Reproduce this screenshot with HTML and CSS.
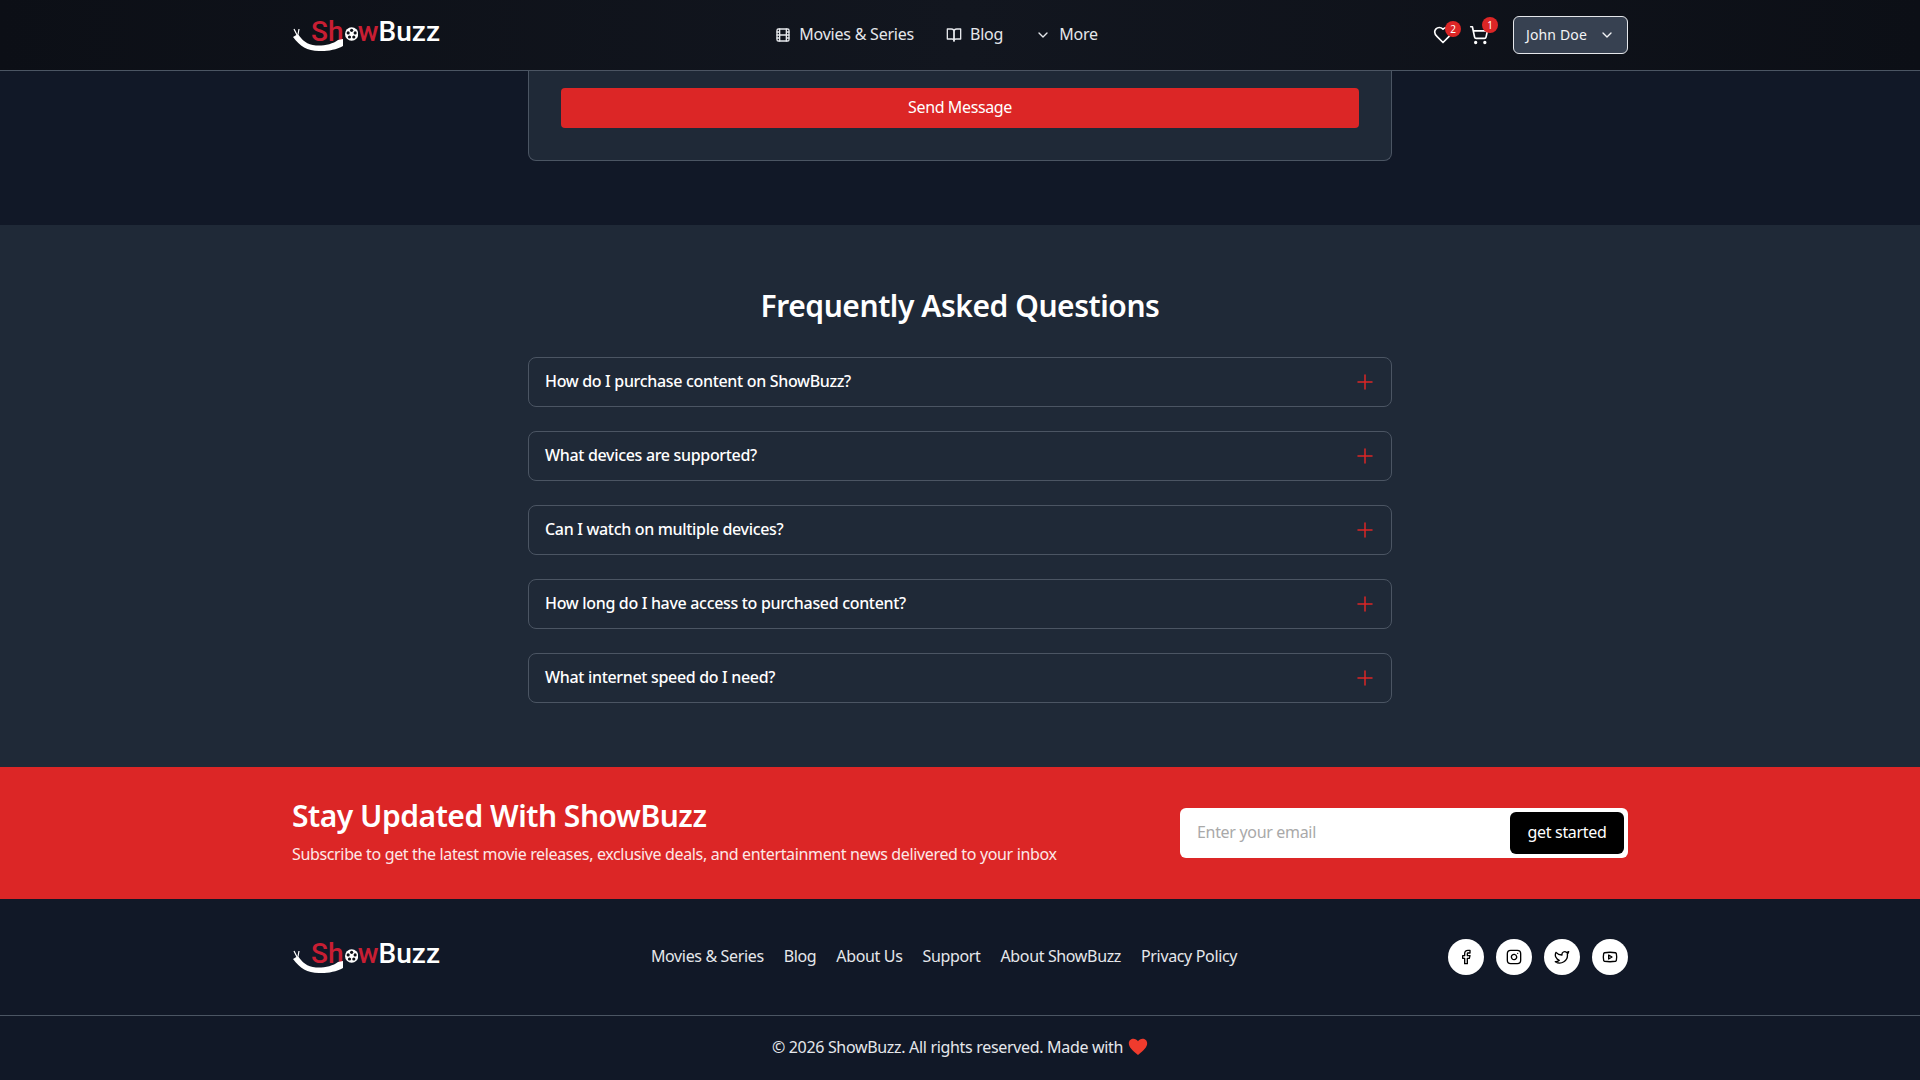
FILE: index.html
```html
<!DOCTYPE html>
<html lang="en">
<head>
<meta charset="UTF-8" />
<title>ShowBuzz - Contact</title>
<link rel="stylesheet" href="styles.css">
</head>
<body>

<svg class="sprite" width="0" height="0" aria-hidden="true">
  <symbol id="swoosh" viewBox="0 0 52 28">
    <path d="M1 11 L6 8 C10 14 15 19 24 19.5 C32 20 41 18 46 14 L51 13 L51 20 C44 24 34 25.500 27 25 C15 25 8 20 1 11 Z" fill="#fff"/>
    <path d="M5 9 L2 3 M6 8.500 L7 3" stroke="#fff" stroke-width="1.200" fill="none"/>
  </symbol>
  <symbol id="reel" viewBox="0 0 16 16">
    <circle cx="8" cy="8" r="8" fill="#fff"/>
    <g fill="#0d1017">
      <circle cx="8" cy="3.600" r="1.900"/>
      <circle cx="3.800" cy="6.700" r="1.900"/>
      <circle cx="12.200" cy="6.700" r="1.900"/>
      <circle cx="5.400" cy="11.600" r="1.900"/>
      <circle cx="10.600" cy="11.600" r="1.900"/>
    </g>
  </symbol>
</svg>

<header class="site-header">
  <div class="wrap header-row">
    <a class="logo" href="#">
      <span class="logo-red">Sh</span><svg class="logo-reel"><use href="#reel"/></svg><span class="logo-red">w</span>Buzz
      <svg class="logo-swoosh"><use href="#swoosh"/></svg>
    </a>
    <nav class="main-nav">
      <a href="#">
        <svg class="icon" viewBox="0 0 24 24"><rect x="3" y="3" width="18" height="18" rx="2"/><path d="M7 3v18M3 7.500h4M3 12h18M3 16.500h4M17 3v18M17 7.500h4M17 16.500h4"/></svg>
        <span class="txt">Movies &amp; Series</span>
      </a>
      <a href="#">
        <svg class="icon" viewBox="0 0 24 24"><path d="M2 3h6a4 4 0 0 1 4 4v14a3 3 0 0 0-3-3H2z"/><path d="M22 3h-6a4 4 0 0 0-4 4v14a3 3 0 0 1 3-3h7z"/></svg>
        <span class="txt">Blog</span>
      </a>
      <a href="#">
        <svg class="icon" viewBox="0 0 24 24"><path d="m6 9 6 6 6-6"/></svg>
        <span class="txt">More</span>
      </a>
    </nav>
    <div class="header-actions">
      <a class="action" href="#">
        <svg class="icon icon-action" viewBox="0 0 24 24"><path d="M19 14c1.490-1.460 3-3.210 3-5.500A5.500 5.500 0 0 0 16.500 3c-1.760 0-3 .5-4.500 2-1.500-1.500-2.740-2-4.500-2A5.500 5.500 0 0 0 2 8.500c0 2.300 1.500 4.050 3 5.500l7 7Z"/></svg>
        <span class="badge">2</span>
      </a>
      <a class="action" href="#">
        <svg class="icon icon-action" viewBox="0 0 24 24"><circle cx="8" cy="21" r="1"/><circle cx="19" cy="21" r="1"/><path d="M2.050 2.050h2l2.660 12.420a2 2 0 0 0 2 1.580h9.780a2 2 0 0 0 1.950-1.570l1.650-7.430H5.120"/></svg>
        <span class="badge badge-cart">1</span>
      </a>
      <button class="user-btn" type="button">
        <span class="txt">John Doe</span>
        <svg class="icon" viewBox="0 0 24 24"><path d="m6 9 6 6 6-6"/></svg>
      </button>
    </div>
  </div>
</header>

<section class="contact">
  <div class="contact-card">
    <button class="send-btn" type="button">Send Message</button>
  </div>
</section>

<section class="faq">
  <h2>Frequently Asked Questions</h2>
  <div class="faq-list">
    <div class="faq-item"><span class="txt">How do I purchase content on ShowBuzz?</span><svg class="plus" viewBox="0 0 24 24"><path d="M5 12h14M12 5v14"/></svg></div>
    <div class="faq-item"><span class="txt">What devices are supported?</span><svg class="plus" viewBox="0 0 24 24"><path d="M5 12h14M12 5v14"/></svg></div>
    <div class="faq-item"><span class="txt">Can I watch on multiple devices?</span><svg class="plus" viewBox="0 0 24 24"><path d="M5 12h14M12 5v14"/></svg></div>
    <div class="faq-item"><span class="txt">How long do I have access to purchased content?</span><svg class="plus" viewBox="0 0 24 24"><path d="M5 12h14M12 5v14"/></svg></div>
    <div class="faq-item"><span class="txt">What internet speed do I need?</span><svg class="plus" viewBox="0 0 24 24"><path d="M5 12h14M12 5v14"/></svg></div>
  </div>
</section>

<section class="newsletter">
  <div class="wrap newsletter-row">
    <div class="news-text">
      <h3>Stay Updated With ShowBuzz</h3>
      <p>Subscribe to get the latest movie releases, exclusive deals, and entertainment news delivered to your inbox</p>
    </div>
    <form class="news-form">
      <input type="email" placeholder="Enter your email" />
      <button type="button">get started</button>
    </form>
  </div>
</section>

<footer class="site-footer">
  <div class="wrap footer-row">
    <a class="logo" href="#">
      <span class="logo-red">Sh</span><svg class="logo-reel"><use href="#reel"/></svg><span class="logo-red">w</span>Buzz
      <svg class="logo-swoosh"><use href="#swoosh"/></svg>
    </a>
    <nav class="footer-nav">
      <a href="#">Movies &amp; Series</a>
      <a href="#">Blog</a>
      <a href="#">About Us</a>
      <a href="#">Support</a>
      <a href="#">About ShowBuzz</a>
      <a href="#">Privacy Policy</a>
    </nav>
    <div class="socials">
      <a href="#"><svg class="icon" viewBox="0 0 24 24"><path d="M18 2h-3a5 5 0 0 0-5 5v3H7v4h3v8h4v-8h3l1-4h-4V7a1 1 0 0 1 1-1h3z"/></svg></a>
      <a href="#"><svg class="icon" viewBox="0 0 24 24"><rect x="2" y="2" width="20" height="20" rx="5"/><path d="M16 11.370A4 4 0 1 1 12.630 8 4 4 0 0 1 16 11.370z"/><path d="M17.500 6.500h.01"/></svg></a>
      <a href="#"><svg class="icon" viewBox="0 0 24 24"><path d="M22 4s-.7 2.100-2 3.400c1.600 10-9.400 17.300-18 11.600 2.200.1 4.400-.6 6-2C3 15.500.5 9.600 3 5c2.200 2.600 5.600 4.100 9 4-.9-4.200 4-6.600 7-3.800 1.100 0 3-1.200 3-1.200z"/></svg></a>
      <a href="#"><svg class="icon" viewBox="0 0 24 24"><path d="M2.500 17a24.120 24.120 0 0 1 0-10 2 2 0 0 1 1.400-1.400 49.560 49.560 0 0 1 16.200 0A2 2 0 0 1 21.500 7a24.120 24.120 0 0 1 0 10 2 2 0 0 1-1.400 1.400 49.550 49.550 0 0 1-16.200 0A2 2 0 0 1 2.500 17"/><path d="m10 15 5-3-5-3z"/></svg></a>
    </div>
  </div>
  <p class="copyright">
    &copy; 2026 ShowBuzz. All rights reserved. Made with
    <svg class="heart" viewBox="0 0 24 24"><path d="M12 21.500C5 16 1 12 1 7.500 1 4 3.700 2 6.500 2 8.700 2 10.800 3.200 12 5.200 13.200 3.200 15.300 2 17.500 2 20.300 2 23 4 23 7.500 23 12 19 16 12 21.500Z"/></svg>
  </p>
</footer>

</body>
</html>
```

FILE: styles.css
```css
* {
  box-sizing: border-box;
}
html, body {
  height: 100%;
}
body {
  margin: 0;
  overflow: hidden;
  background: #111827;
  color: #fff;
  font-family: "Noto Sans", "Open Sans", sans-serif;
  font-size: 16px;
  letter-spacing: -0.02em;
}
a {
  color: inherit;
  text-decoration: none;
}
.sprite {
  position: absolute;
}
.wrap {
  width: 1336px;
  margin: 0 auto;
}
.icon {
  width: 16px;
  height: 16px;
  fill: none;
  stroke: currentColor;
  stroke-width: 2;
  stroke-linecap: round;
  stroke-linejoin: round;
  flex: none;
}
/* lifts flex text a pixel so it sits level with its icon */
.txt {
  display: block;
  margin-bottom: 2px;
}

/* Header */
.site-header {
  height: 71px;
  background: linear-gradient(90deg, #0c0f16 0%, #12161f 50%, #0c0f16 100%);
  border-bottom: 1px solid #4b5563;
}
.header-row {
  height: 70px;
  display: flex;
  align-items: center;
  justify-content: space-between;
}
.logo {
  position: relative;
  display: flex;
  align-items: center;
  width: 148px;
  height: 40px;
  padding: 0 0 7px 19px;
  font-family: Roboto, sans-serif;
  font-size: 28px;
  font-weight: 500;
  letter-spacing: 0;
  white-space: nowrap;
}
.logo-red {
  color: #c81e33;
}
.logo-reel {
  width: 16px;
  height: 16px;
  margin: 5px 0 0 1px;
}
.logo-swoosh {
  position: absolute;
  left: 0;
  top: 11px;
  width: 52px;
  height: 28px;
}
.main-nav {
  display: flex;
  align-items: center;
  gap: 32px;
  color: #e5e7eb;
  letter-spacing: -0.014em;
}
.main-nav a {
  display: flex;
  align-items: center;
  gap: 8px;
}
.header-actions {
  display: flex;
  align-items: center;
  gap: 16px;
}
.action {
  position: relative;
  display: flex;
}
.icon-action {
  width: 20px;
  height: 20px;
}
.badge {
  position: absolute;
  top: -4px;
  right: -8px;
  width: 16px;
  height: 16px;
  border-radius: 50%;
  background: #dc2626;
  font-size: 10px;
  line-height: 16px;
  text-align: center;
}
.badge-cart {
  right: -9px;
  top: -8px;
}
.user-btn {
  width: 115px;
  height: 38px;
  margin-left: 8px;
  padding: 0 12px;
  display: flex;
  align-items: center;
  justify-content: space-between;
  background: #374151;
  color: #f3f4f6;
  border: 1px solid #e5e7eb;
  border-radius: 6px;
  font: inherit;
  font-size: 14px;
  letter-spacing: 0.01em;
}

/* Contact card, cut by the header */
.contact {
  padding-bottom: 64px;
}
.contact-card {
  width: 864px;
  margin: 0 auto;
  padding: 17px 32px 32px;
  background: #1f2937;
  border: 1px solid #4b5563;
  border-top: 0;
  border-radius: 0 0 8px 8px;
}
.send-btn {
  display: block;
  width: 100%;
  height: 40px;
  padding: 0 0 2px;
  background: #dc2626;
  color: #fff;
  border: 0;
  border-radius: 4px;
  font: inherit;
  letter-spacing: -0.024em;
}

/* FAQ */
.faq {
  padding: 63px 0 64px;
  background: #1f2937;
}
.faq h2 {
  margin: 0 0 33px;
  font-size: 30px;
  font-weight: 600;
  line-height: 36px;
  letter-spacing: -0.015em;
  text-align: center;
}
.faq-list {
  width: 864px;
  margin: 0 auto;
  display: flex;
  flex-direction: column;
  gap: 24px;
}
.faq-item {
  height: 50px;
  padding: 0 14px 0 16px;
  display: flex;
  align-items: center;
  justify-content: space-between;
  border: 1px solid #4b5563;
  border-radius: 8px;
  font-weight: 500;
}
.plus {
  width: 24px;
  height: 24px;
  fill: none;
  stroke: #dc2626;
  stroke-width: 1.5;
  stroke-linecap: round;
}

/* Newsletter */
.newsletter {
  height: 132px;
  background: #dc2626;
}
.newsletter-row {
  height: 100%;
  display: flex;
  align-items: center;
  justify-content: space-between;
}
.news-text {
  margin-bottom: 2px;
}
.newsletter h3 {
  margin: 0 0 8px;
  font-size: 30px;
  font-weight: 600;
  line-height: 36px;
  letter-spacing: -0.016em;
}
.newsletter p {
  margin: 0;
  color: #fde8e8;
  line-height: 24px;
  letter-spacing: -0.022em;
}
.news-form {
  width: 448px;
  height: 50px;
  padding: 4px;
  display: flex;
  align-items: stretch;
  background: #fff;
  border-radius: 6px;
}
.news-form input {
  flex: 1;
  min-width: 0;
  padding: 0 13px 2px;
  border: 0;
  outline: none;
  background: none;
  font: inherit;
  letter-spacing: inherit;
}
.news-form input::placeholder {
  color: #a9a9a9;
}
.news-form button {
  width: 114px;
  padding: 0 0 2px;
  background: #000;
  color: #fff;
  border: 0;
  border-radius: 6px;
  font: inherit;
  letter-spacing: inherit;
}

/* Footer */
.footer-row {
  height: 116px;
  display: flex;
  align-items: center;
  justify-content: space-between;
}
.site-footer {
  height: 181px;
  background: #111827;
}
.footer-nav {
  display: flex;
  gap: 20px;
  margin-bottom: 2px;
  color: #e5e7eb;
  letter-spacing: -0.022em;
}
.socials {
  display: flex;
  gap: 12px;
}
.socials a {
  width: 36px;
  height: 36px;
  display: flex;
  align-items: center;
  justify-content: center;
  border-radius: 50%;
  background: #fff;
  color: #000;
}
.copyright {
  margin: 0;
  height: 65px;
  padding-bottom: 2px;
  display: flex;
  align-items: center;
  justify-content: center;
  gap: 5px;
  border-top: 1px solid #4b5563;
  color: #e5e7eb;
}
.heart {
  width: 20px;
  height: 20px;
  fill: #ef3b2d;
}
```
